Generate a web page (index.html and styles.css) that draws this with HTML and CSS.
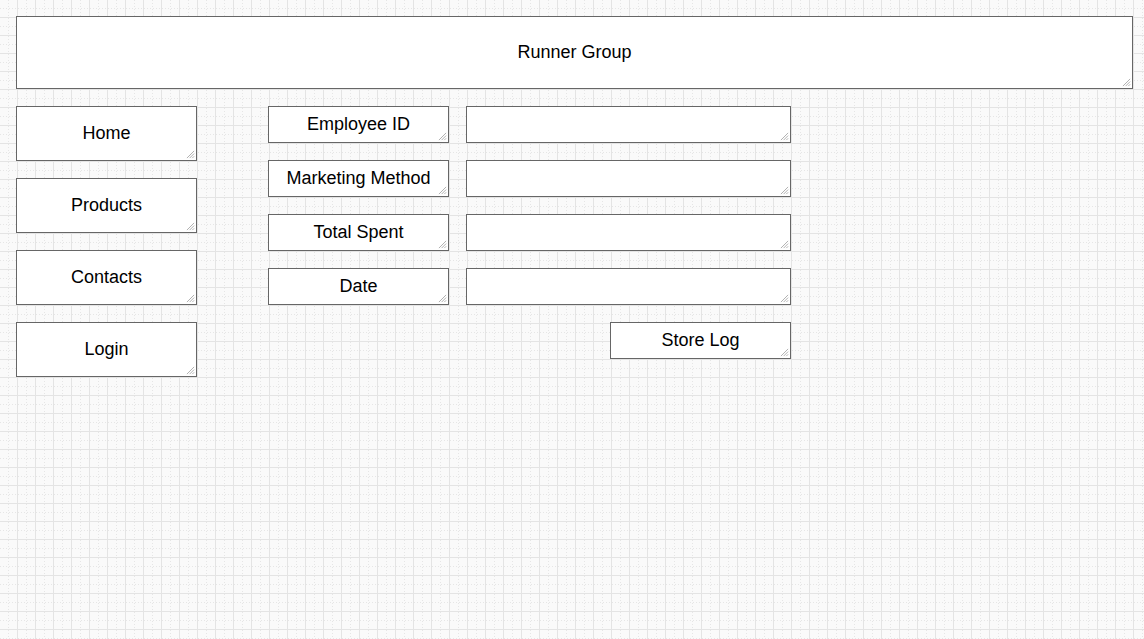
FILE: index.html
```html
<!DOCTYPE html>
<html lang="en">
<head>
<meta charset="utf-8">
<title>Runner Group</title>
<link rel="stylesheet" href="styles.css">
</head>
<body>
<div class="canvas">
  <header class="box header">Runner Group<svg class="grip" viewBox="0 0 10 10"><path d="M9 1L1 9M9 4L4 9M9 7L7 9"/></svg></header>
  <div class="main">
    <nav class="nav">
      <div class="box navbtn">Home<svg class="grip" viewBox="0 0 10 10"><path d="M9 1L1 9M9 4L4 9M9 7L7 9"/></svg></div>
      <div class="box navbtn">Products<svg class="grip" viewBox="0 0 10 10"><path d="M9 1L1 9M9 4L4 9M9 7L7 9"/></svg></div>
      <div class="box navbtn">Contacts<svg class="grip" viewBox="0 0 10 10"><path d="M9 1L1 9M9 4L4 9M9 7L7 9"/></svg></div>
      <div class="box navbtn">Login<svg class="grip" viewBox="0 0 10 10"><path d="M9 1L1 9M9 4L4 9M9 7L7 9"/></svg></div>
    </nav>
    <form class="form">
      <div class="box label">Employee ID<svg class="grip" viewBox="0 0 10 10"><path d="M9 1L1 9M9 4L4 9M9 7L7 9"/></svg></div>
      <div class="box field"><svg class="grip" viewBox="0 0 10 10"><path d="M9 1L1 9M9 4L4 9M9 7L7 9"/></svg></div>
      <div class="box label">Marketing Method<svg class="grip" viewBox="0 0 10 10"><path d="M9 1L1 9M9 4L4 9M9 7L7 9"/></svg></div>
      <div class="box field"><svg class="grip" viewBox="0 0 10 10"><path d="M9 1L1 9M9 4L4 9M9 7L7 9"/></svg></div>
      <div class="box label">Total Spent<svg class="grip" viewBox="0 0 10 10"><path d="M9 1L1 9M9 4L4 9M9 7L7 9"/></svg></div>
      <div class="box field"><svg class="grip" viewBox="0 0 10 10"><path d="M9 1L1 9M9 4L4 9M9 7L7 9"/></svg></div>
      <div class="box label">Date<svg class="grip" viewBox="0 0 10 10"><path d="M9 1L1 9M9 4L4 9M9 7L7 9"/></svg></div>
      <div class="box field"><svg class="grip" viewBox="0 0 10 10"><path d="M9 1L1 9M9 4L4 9M9 7L7 9"/></svg></div>
      <div class="box label submit">Store Log<svg class="grip" viewBox="0 0 10 10"><path d="M9 1L1 9M9 4L4 9M9 7L7 9"/></svg></div>
    </form>
  </div>
</div>
</body>
</html>
```
FILE: styles.css
```css
html, body {
  margin: 0;
  padding: 0;
  height: 100%;
}
body {
  font-family: "Liberation Sans", Arial, sans-serif;
  font-size: 18px;
  color: #000;
  background-color: #fafafa;
  background-image: url("data:image/svg+xml;utf8,<svg xmlns='http://www.w3.org/2000/svg' width='18' height='18'><path d='M0 8.5H18M8.5 0V18' stroke='%23e6e6e6' stroke-width='1' stroke-dasharray='1 2' fill='none'/><path d='M0 17.5H18M17.5 0V18' stroke='%23e4e4e4' stroke-width='1' fill='none'/></svg>");
  background-size: 18px 18px;
  background-position: 0 0;
}
.canvas {
  padding: 16px;
  display: flex;
  flex-direction: column;
  gap: 17px;
}
.box {
  position: relative;
  box-sizing: border-box;
  background: #fff;
  border: 1px solid #666;
  display: flex;
  align-items: center;
  justify-content: center;
  white-space: nowrap;
}
.grip {
  position: absolute;
  right: 1px;
  bottom: 1px;
  width: 9px;
  height: 9px;
}
.grip path {
  stroke: #a8a8a8;
  stroke-width: 1;
  fill: none;
}
.header {
  width: 1117px;
  height: 73px;
}
.main {
  display: flex;
  align-items: flex-start;
}
.nav {
  display: flex;
  flex-direction: column;
  gap: 17px;
  width: 181px;
}
.navbtn {
  height: 55px;
}
.form {
  margin: 0 0 0 71px;
  display: grid;
  grid-template-columns: 181px 325px;
  grid-auto-rows: 37px;
  column-gap: 17px;
  row-gap: 17px;
}
.submit {
  grid-column: 2;
  justify-self: end;
  width: 181px;
}
```
